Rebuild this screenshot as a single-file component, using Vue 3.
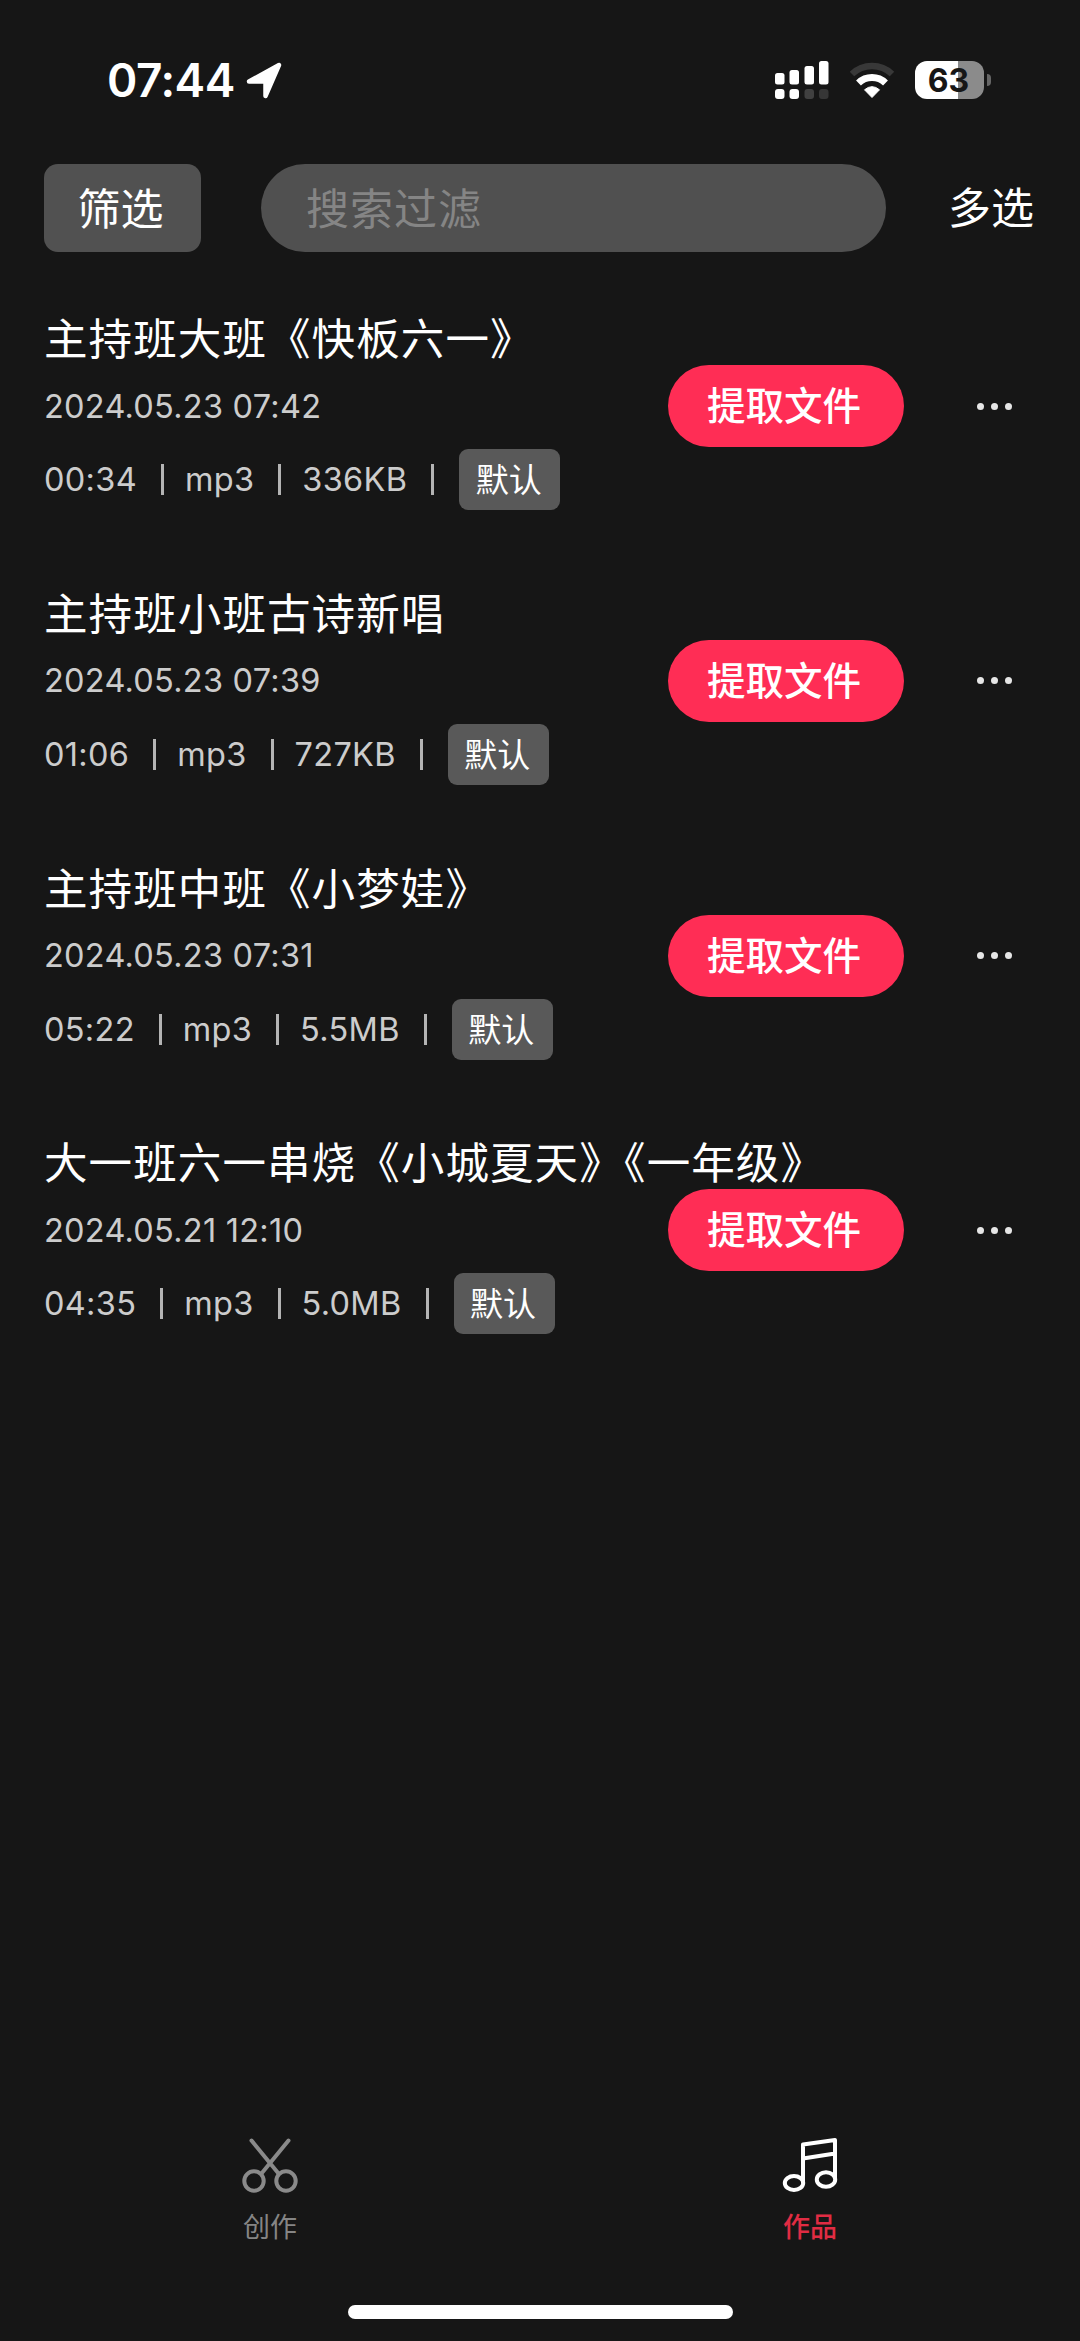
<script setup>
const works = [
  { title: '主持班大班《快板六一》', date: '2024.05.23 07:42', duration: '00:34', size: '336KB' },
  { title: '主持班小班古诗新唱', date: '2024.05.23 07:39', duration: '01:06', size: '727KB' },
  { title: '主持班中班《小梦娃》', date: '2024.05.23 07:31', duration: '05:22', size: '5.5MB' },
  { title: '大一班六一串烧《小城夏天》《一年级》', date: '2024.05.21 12:10', duration: '04:35', size: '5.0MB' },
]
</script>

<template>
  <div class="screen">
    <header class="status">
      <span class="time">07:44</span>
      <svg class="arrow" viewBox="0 0 36 38" width="36" height="38">
        <path d="M33 4 L19.500 35 V20.500 H3 Z" fill="#fff" stroke="#fff" stroke-width="4.500" stroke-linejoin="round" />
      </svg>
      <svg class="signal" viewBox="0 0 54 38" width="54" height="38">
        <g fill="#fff">
          <rect x="0" y="12" width="9.500" height="11.500" rx="2.500" />
          <rect x="14.500" y="9" width="9.500" height="14.500" rx="2.500" />
          <rect x="29.500" y="5" width="9.500" height="18.500" rx="2.500" />
          <rect x="44" y="0" width="9.500" height="23.500" rx="2.500" />
          <rect x="0" y="28" width="9.500" height="10" rx="3" />
          <rect x="14.500" y="28" width="9.500" height="10" rx="3" />
        </g>
        <rect x="29.500" y="28" width="9.500" height="10" rx="3" fill="#404040" />
        <rect x="44" y="28" width="9.500" height="10" rx="3" fill="#363636" />
      </svg>
      <svg class="wifi" viewBox="0 0 46 38" width="46" height="38">
        <path d="M3 13 A29 29 0 0 1 43 13" fill="none" stroke="#383838" stroke-width="6.500" />
        <path d="M9.500 22 A19.500 19.500 0 0 1 36.500 22" fill="none" stroke="#fff" stroke-width="7" />
        <path d="M23 36.500 L15.500 28.800 Q23 22.500 30.500 28.800 Z" fill="#fff" stroke="#fff" stroke-width="1" stroke-linejoin="round" />
      </svg>
      <div class="battery">63</div>
      <div class="nub"></div>
    </header>

    <div class="toolbar">
      <button class="filter">筛选</button>
      <div class="search">搜索过滤</div>
      <span class="multi">多选</span>
    </div>

    <main class="list">
      <article v-for="w in works" :key="w.title" class="item">
        <h2 class="title">{{ w.title }}</h2>
        <div class="middle">
          <span class="date">{{ w.date }}</span>
          <button class="extract">提取文件</button>
          <div class="more"><i></i><i></i><i></i></div>
        </div>
        <div class="meta">
          <span>{{ w.duration }}</span><b></b>
          <span>mp3</span><b></b>
          <span>{{ w.size }}</span><b></b>
          <span class="tag">默认</span>
        </div>
      </article>
    </main>

    <nav class="tabs">
      <div class="tab">
        <svg viewBox="0 0 56 56" width="56" height="56" fill="none" stroke="#8a8a8a" stroke-width="4" stroke-linecap="round">
          <path d="M9.500 3.500 L36.500 36.500 M46.500 3.500 L19.500 36.500" />
          <circle cx="12" cy="44" r="9.700" />
          <circle cx="44" cy="44" r="9.700" />
        </svg>
        <span>创作</span>
      </div>
      <div class="tab active">
        <svg viewBox="0 0 56 56" width="56" height="56" fill="none" stroke="#fff" stroke-width="4" stroke-linejoin="round">
          <path d="M21 46 V7.500 L53 3 V42 M21 21.500 L53 16.500" />
          <ellipse cx="12" cy="46" rx="9.200" ry="7" />
          <ellipse cx="44" cy="42.500" rx="9.200" ry="7.200" />
        </svg>
        <span>作品</span>
      </div>
    </nav>
    <div class="home"></div>
  </div>
</template>

<style>
body { margin: 0; background: #161616; }
</style>

<style scoped>
.screen {
  box-sizing: border-box;
  width: 1080px;
  height: 2341px;
  display: flex;
  flex-direction: column;
  background: #161616;
  color: #fff;
  font-family: Inter, "Noto Sans CJK SC", sans-serif;
  overflow: hidden;
}
button { border: 0; margin: 0; padding: 0; font: inherit; color: inherit; }
.status {
  height: 38px;
  padding: 61px 0 0 107px;
  display: flex;
  align-items: center;
}
.time { width: 139px; font-size: 46px; font-weight: 600; line-height: 38px; letter-spacing: -0.5px; white-space: nowrap; }
.arrow { margin-right: 493px; }
.signal { margin-right: 20px; }
.wifi { margin-right: 20px; }
.battery {
  box-sizing: border-box;
  width: 69px;
  height: 38px;
  padding-right: 2px;
  border-radius: 12px;
  background: linear-gradient(90deg, #fff 62%, #8b8b8b 62%);
  color: #161616;
  font-size: 32px;
  font-weight: 700;
  line-height: 39px;
  text-align: center;
}
.nub { width: 4px; height: 12px; margin-left: 3px; border-radius: 0 4px 4px 0; background: #666; }
.toolbar {
  margin-top: 65px;
  height: 88px;
  padding: 0 46px 0 44px;
  display: flex;
  align-items: center;
  font-size: 43px;
  line-height: 90px;
}
.filter {
  box-sizing: border-box;
  width: 157px;
  height: 88px;
  padding-right: 4px;
  border-radius: 14px;
  background: #515151;
  line-height: 90px;
}
.search {
  box-sizing: border-box;
  width: 625px;
  height: 88px;
  margin-left: 60px;
  padding-left: 45px;
  border-radius: 44px;
  background: #505050;
  color: #858585;
  letter-spacing: 1px;
}
.multi { margin-left: auto; }
.list { padding-top: 51px; }
.item { height: 274.800px; padding-left: 44px; }
.title {
  margin: 0;
  height: 71px;
  font-size: 43.500px;
  font-weight: 400;
  line-height: 72px;
  letter-spacing: 1.1px;
  white-space: nowrap;
}
.middle { height: 64px; display: flex; align-items: center; }
.date { width: 624px; font-size: 32.500px; color: #ccc; letter-spacing: 0.25px; white-space: nowrap; }
.extract {
  box-sizing: border-box;
  width: 236px;
  height: 82px;
  padding-right: 4px;
  flex: none;
  border-radius: 41px;
  background: #ff2d55;
  font-size: 38.500px;
  font-weight: 500;
  line-height: 83px;
}
.more { margin-left: 73px; display: flex; gap: 7px; }
.more i { width: 7px; height: 7px; border-radius: 50%; background: #e6e6e6; }
.meta {
  height: 83px;
  display: flex;
  align-items: center;
  color: #ccc;
  font-size: 32.500px;
  letter-spacing: 0.3px;
}
.meta b { width: 3px; height: 31px; margin: 0 21px 0 24px; background: #b4b4b4; }
.meta b:last-of-type { margin-right: 25px; }
.meta .tag {
  box-sizing: border-box;
  width: 101px;
  height: 61px;
  padding-right: 2px;
  border-radius: 9px;
  background: #595959;
  color: #fff;
  font-size: 33px;
  line-height: 62px;
  text-align: center;
  letter-spacing: 0;
}
.tabs { margin-top: auto; height: 168px; display: flex; }
.tab { flex: 1; display: flex; flex-direction: column; align-items: center; color: #858585; font-size: 27px; }
.tab span { margin-top: 16px; line-height: 38px; }
.active { color: #e12c43; font-weight: 500; }
.home { width: 385px; height: 14px; margin: 0 auto 22px; border-radius: 7px; background: #fff; }
</style>
